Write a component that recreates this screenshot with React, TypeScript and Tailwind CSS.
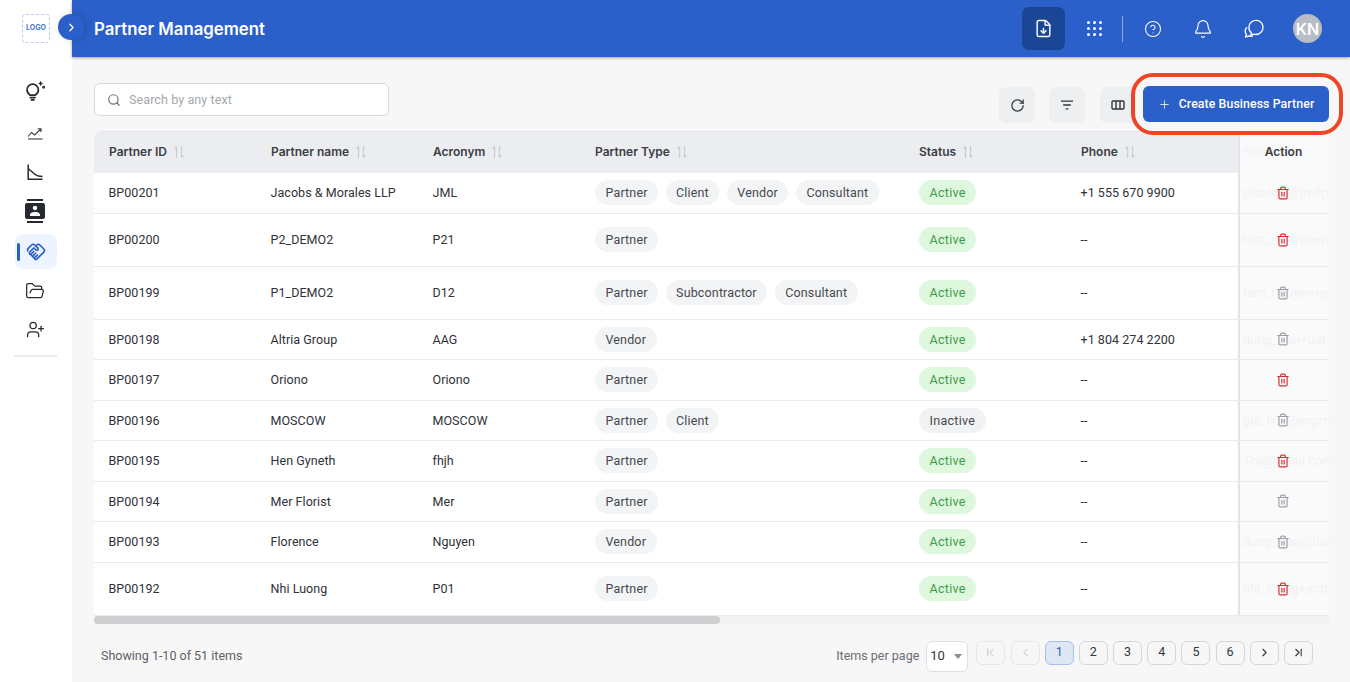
import type React from "react"
import { Bell, ChevronFirst, ChevronLast, ChevronLeft, ChevronRight, CircleHelp, FileDown, FolderOpen, Plus, RotateCw, Search, Trash2, UserPlus } from "lucide-react"
import { MdContacts, MdOutlineHandshake } from "react-icons/md"

const rows = [
  { id: "BP00201", name: "Jacobs & Morales LLP", acronym: "JML", types: ["Partner", "Client", "Vendor", "Consultant"], status: "Active", phone: "+1 555 670 9900", email: "phoenix@jmllp.com", canDelete: true, h: "h-[40.5px]" },
  { id: "BP00200", name: "P2_DEMO2", acronym: "P21", types: ["Partner"], status: "Active", phone: "--", email: "tam_nguyen+p2", canDelete: true, h: "h-[53px]" },
  { id: "BP00199", name: "P1_DEMO2", acronym: "D12", types: ["Partner", "Subcontractor", "Consultant"], status: "Active", phone: "--", email: "tam_nguyen+p1", canDelete: false, h: "h-[53px]" },
  { id: "BP00198", name: "Altria Group", acronym: "AAG", types: ["Vendor"], status: "Active", phone: "+1 804 274 2200", email: "dung_tran+uat", canDelete: false, h: "h-[40.5px]" },
  { id: "BP00197", name: "Oriono", acronym: "Oriono", types: ["Partner"], status: "Active", phone: "--", email: "--", canDelete: true, h: "h-[40.5px]" },
  { id: "BP00196", name: "MOSCOW", acronym: "MOSCOW", types: ["Partner", "Client"], status: "Inactive", phone: "--", email: "gia_huy@yopm", canDelete: false, h: "h-[40.5px]" },
  { id: "BP00195", name: "Hen Gyneth", acronym: "fhjh", types: ["Partner"], status: "Active", phone: "--", email: "Thi@gmail.com", canDelete: true, h: "h-[40.5px]" },
  { id: "BP00194", name: "Mer Florist", acronym: "Mer", types: ["Partner"], status: "Active", phone: "--", email: "--", canDelete: false, h: "h-[40.5px]" },
  { id: "BP00193", name: "Florence", acronym: "Nguyen", types: ["Vendor"], status: "Active", phone: "--", email: "dung_tran@data", canDelete: false, h: "h-[40.5px]" },
  { id: "BP00192", name: "Nhi Luong", acronym: "P01", types: ["Partner"], status: "Active", phone: "--", email: "nhi_luong+actd", canDelete: true, h: "h-[53px]" },
]

const SortIcon = () => (
  <svg width="12" height="14" viewBox="0 0 12 14" fill="none" stroke="#c9ccd1" strokeWidth="1.2">
    <path d="M3.5 13V1.5M1.5 3.5l2-2" />
    <path d="M8.5 1v11.5M10.5 10.5l-2 2" />
  </svg>
)

function Header({ label, className }: { label: string; className: string }) {
  return (
    <div className={`flex items-center gap-[6px] pb-[2px] pl-[15px] text-[12px] font-semibold text-[#3a3d42] ${className}`}>
      {label}
      <SortIcon />
    </div>
  )
}

const IdeaIcon = () => (
  <svg width="24" height="24" viewBox="0 0 24 24" fill="none" stroke="#26292e" strokeWidth="1.7" strokeLinecap="round">
    <path d="M7.2 16.2C5.2 14.9 4 13 4 10.8 4 7.6 6.6 5.2 9.7 5.2s5.7 2.4 5.7 5.6c0 2.2-1.2 4.1-3.2 5.4z" />
    <path d="M7.3 18.6h4.8M8.4 20.8h2.6" />
    <path d="M17.6 3v3M16.1 4.5h3" strokeWidth="1.3" />
    <circle cx="20.6" cy="8.2" r=".6" fill="#26292e" />
  </svg>
)

const TrendIcon = () => (
  <svg width="18" height="18" viewBox="0 0 18 18" fill="none" stroke="#3a3d42" strokeWidth="1.1">
    <path d="M2 15h14.5" />
    <path d="M2 12.5l3.6-4 3 2.4L14.8 5M11.6 4.7h3.4v3.2" />
  </svg>
)

const DeclineIcon = () => (
  <svg width="18" height="18" viewBox="0 0 18 18" fill="none" stroke="#26292e" strokeWidth="1.5">
    <path d="M2.2 1.5v14.7h14.3" />
    <path d="M2.2 5.5l6 5.2c2 1.7 4.5 2.7 8.3 2.7" />
  </svg>
)

const ColumnsIcon = () => (
  <svg width="14" height="12" viewBox="0 0 14 12" fill="none" stroke="#33363b" strokeWidth="1.4">
    <rect x="1" y="2" width="12" height="8" rx="1" />
    <path d="M5 2v8M9 2v8" />
  </svg>
)

const FilterLines = () => (
  <svg width="14" height="12" viewBox="0 0 14 12" fill="none" stroke="#33363b" strokeWidth="1.3">
    <path d="M1 2.2h12M3.2 6h7.6M5.6 9.8h2.8" />
  </svg>
)

const ChatIcon = () => (
  <svg width="22" height="22" viewBox="0 0 20 20" fill="none" stroke="white" strokeWidth="1.2" strokeLinejoin="round">
    <path d="M5.4 8.3a6.4 6.4 0 1 1 4.3 6.3c-.7.4-1.7.8-2.7.8.4-.6.6-1.2.6-1.9a6.3 6.3 0 0 1-2.2-5.2z" />
    <path d="M3.7 8.4c-1 .9-1.7 2.2-1.7 3.6 0 1.1.4 2.2 1.1 3-.1.8-.4 1.5-.9 2.2 1.1 0 2.3-.3 3.1-1 1.2.5 2.6.5 3.8.1" />
  </svg>
)

const GridIcon = () => (
  <div className="grid grid-cols-3 gap-[3px]">
    {Array.from({ length: 9 }).map((_, i) => (
      <span key={i} className="h-[3px] w-[3px] rounded-full bg-white" />
    ))}
  </div>
)

function Sidebar() {
  return (
    <aside className="relative z-10 flex w-[72px] shrink-0 flex-col bg-white">
      <div className="flex h-[57px] items-center pl-[22px]">
        <div className="flex h-[29px] w-[28px] items-center justify-center rounded-[4px] border border-dashed border-[#b9c9ee] text-[7px] font-bold text-[#4a78d6]">LOGO</div>
      </div>
      <div className="flex flex-col items-center pr-[2px] pt-[15px]">
        <div className="flex h-[38px] w-full items-center justify-center"><IdeaIcon /></div>
        <div className="flex h-[46px] w-full items-center justify-center"><TrendIcon /></div>
        <div className="flex h-[32px] w-full items-center justify-center"><DeclineIcon /></div>
        <div className="flex h-[46px] w-full items-center justify-center"><MdContacts className="text-[#26292e]" size={24} /></div>
        <div className="relative ml-[1px] flex h-[35px] w-[42px] items-center justify-center rounded-[8px] bg-[#edf4ff] text-[#2b5fc9]">
          <span className="absolute left-[2px] top-[9px] h-[18px] w-[3px] rounded-full bg-[#2b5fc9]" />
          <MdOutlineHandshake size={20} />
        </div>
        <div className="flex h-[44px] w-full items-center justify-center"><FolderOpen size={20} strokeWidth={1.5} color="#26292e" /></div>
        <div className="flex h-[32px] w-full items-center justify-center"><UserPlus size={19} strokeWidth={1.6} color="#26292e" /></div>
        <div className="mt-[10px] h-[2px] w-[43px] bg-[#ececee]" />
      </div>
    </aside>
  )
}

function TopBar() {
  return (
    <header className="relative flex h-[57px] shrink-0 items-center bg-[#2b5fc9] pl-[22px] pr-[28px] shadow-[0_1px_3px_rgba(0,0,0,0.35)]">
      <div className="absolute -left-[14px] top-[14px] flex h-[26px] w-[26px] items-center justify-center rounded-full bg-[#2b5fc9] shadow-[2px_0_8px_rgba(0,0,0,0.12)]">
        <ChevronRight size={13} strokeWidth={2.4} color="white" />
      </div>
      <h1 className="pt-[2px] text-[16.8px] font-semibold text-white">Partner Management</h1>
      <div className="ml-auto flex items-center">
        <div className="flex h-[43px] w-[43px] items-center justify-center rounded-[7px] bg-[#1b4695]">
          <FileDown size={19} strokeWidth={1.8} color="white" />
        </div>
        <div className="ml-[21px] flex w-[16px] justify-center"><GridIcon /></div>
        <div className="ml-[20px] h-[26px] w-px bg-[#8aa8e3]" />
        <div className="ml-[21px]"><CircleHelp size={18} strokeWidth={1.4} color="white" /></div>
        <div className="ml-[31px]"><Bell size={20} strokeWidth={1.4} color="white" /></div>
        <div className="ml-[30px]"><ChatIcon /></div>
        <div className="ml-[28px] flex h-[29px] w-[29px] items-center justify-center rounded-full bg-[#b8bcc4] text-[16px] font-semibold text-white">KN</div>
      </div>
    </header>
  )
}

function Toolbar() {
  return (
    <div className="relative flex h-[74px] shrink-0 items-start">
      <div className="mt-[26px] flex h-[33px] w-[295px] items-center gap-[8px] rounded-[6px] border border-[#d5d7db] bg-white pl-[12px] font-['Roboto',sans-serif] text-[12.5px] tracking-[0.1px] text-[#a4a7ad]">
        <Search size={14} strokeWidth={2} color="#6d7076" />
        <span className="pt-[1px]">Search by any text</span>
      </div>
      <div className="ml-auto mt-[30px] flex items-start">
        <button className="flex h-[36px] w-[36px] items-center justify-center rounded-[7px] bg-[#eeeff1]"><RotateCw size={15} strokeWidth={2} color="#33363b" /></button>
        <button className="ml-[14px] flex h-[36px] w-[36px] items-center justify-center rounded-[7px] bg-[#eeeff1]"><FilterLines /></button>
        <button className="ml-[15px] flex h-[36px] w-[36px] items-center justify-center rounded-[7px] bg-[#eeeff1]"><ColumnsIcon /></button>
        <button className="relative z-10 ml-[7px] -mt-px flex h-[36px] w-[186px] items-center justify-center gap-[8px] rounded-[6px] bg-[#2b5fc9] font-['Roboto',sans-serif] text-[12.3px] font-medium tracking-[0.1px] text-white">
          <Plus size={13} strokeWidth={1.4} color="white" />
          Create Business Partner
        </button>
      </div>
      <div className="pointer-events-none absolute -right-[14px] top-[16px] z-20 h-[62px] w-[212px] rounded-[22px] border-[4px] border-[#ee4526]" />
    </div>
  )
}

function Chip({ label }: { label: string }) {
  return <span className="rounded-full bg-[#f3f4f5] px-[10.5px] py-[4px] text-[12.5px] leading-[17px] tracking-[0.15px] text-[#45484d]">{label}</span>
}

function Table() {
  return (
    <div className="overflow-hidden rounded-t-[8px] bg-white font-['Roboto',sans-serif] text-[12.5px] text-[#2f3237]">
      <div className="flex h-[42px] border-t border-[#e2e4e8] font-['Inter',sans-serif]">
        <div className="flex flex-1 bg-[#ecedf1]">
          <Header label="Partner ID" className="w-[162px]" />
          <Header label="Partner name" className="w-[162px]" />
          <Header label="Acronym" className="w-[162px]" />
          <Header label="Partner Type" className="w-[324px]" />
          <Header label="Status" className="w-[162px]" />
          <Header label="Phone" className="flex-1" />
        </div>
        <div className="relative flex w-[91px] items-center justify-center border-l-2 border-[#e3e4e7] bg-[#fafafa] pb-[2px] pr-[2px] text-[12px] font-semibold text-[#3a3d42]">
          <span className="absolute left-[3px] font-normal text-[#f3f3f4]">Email</span>
          <span className="relative">Action</span>
        </div>
      </div>
      {rows.map((row) => (
        <div key={row.id} className={`flex border-b border-[#e9eaec] ${row.h}`}>
          <div className="flex flex-1 items-center tracking-[0.05px]">
            <div className="w-[162px] pl-[14.5px] pt-[2px]">{row.id}</div>
            <div className="w-[162px] pl-[14.5px] pt-[2px]">{row.name}</div>
            <div className="w-[162px] pl-[14.5px] pt-[2px]">{row.acronym}</div>
            <div className="flex w-[324px] gap-[7.5px] pl-[15px]">
              {row.types.map((t) => <Chip key={t} label={t} />)}
            </div>
            <div className="w-[162px] pl-[15px]">
              {row.status === "Active"
                ? <span className="inline-block rounded-full bg-[#ddf8dc] px-[10.5px] py-[4px] leading-[17px] tracking-[0.3px] text-[#3f9a4e]">Active</span>
                : <span className="inline-block rounded-full bg-[#f1f2f3] px-[10.5px] py-[4px] leading-[17px] tracking-[0.3px] text-[#45484d]">Inactive</span>}
            </div>
            <div className="flex-1 pl-[14.5px] pt-[2px]">{row.phone}</div>
          </div>
          <div className="relative flex w-[91px] items-center overflow-hidden whitespace-nowrap border-l-2 border-[#e3e4e7] bg-[#fafafa] pl-[3px] text-[13px] text-[#f2f2f3]">
            {row.email}
            <Trash2 size={14} strokeWidth={2} color={row.canDelete ? "#d32f2f" : "#9a9ea6"} className="absolute left-[36px]" />
          </div>
        </div>
      ))}
    </div>
  )
}

function PageBtn({ children, active, disabled }: { children: React.ReactNode; active?: boolean; disabled?: boolean }) {
  return (
    <div className={`flex h-[24px] w-[29px] items-center justify-center rounded-[6px] border text-[12.5px] ${active ? "border-[#a5c0ec] bg-[#dfe7f5] text-[#2b5fc9]" : disabled ? "border-[#e6e7e9] text-[#b4b6bb]" : "border-[#d5d6d9] text-[#33363b]"}`}>
      {children}
    </div>
  )
}

function Footer() {
  return (
    <div className="flex h-[59px] items-start justify-between pl-[7px] pr-[16px] font-['Roboto',sans-serif]">
      <span className="mt-[24px] text-[12.5px] leading-[16px] text-[#5c5f65]">Showing 1-10 of 51 items</span>
      <div className="mt-[17px] flex items-start">
        <span className="mt-[7px] text-[12.5px] leading-[16px] text-[#6a6d73]">Items per page</span>
        <div className="ml-[7px] flex h-[31px] w-[42px] items-center justify-between rounded-[6px] border border-[#dedfe2] bg-white pl-[3px] pr-[4px] text-[13px] text-[#33363b]">
          10
          <svg width="10" height="5" viewBox="0 0 10 5"><path d="M1 0h8L5 5z" fill="#8a8d93" /></svg>
        </div>
        <div className="ml-[8px] flex gap-[5.2px]">
          <PageBtn disabled><ChevronFirst size={13} strokeWidth={1.6} /></PageBtn>
          <PageBtn disabled><ChevronLeft size={13} strokeWidth={1.6} /></PageBtn>
          <PageBtn active>1</PageBtn>
          <PageBtn>2</PageBtn>
          <PageBtn>3</PageBtn>
          <PageBtn>4</PageBtn>
          <PageBtn>5</PageBtn>
          <PageBtn>6</PageBtn>
          <PageBtn><ChevronRight size={13} strokeWidth={2} /></PageBtn>
          <PageBtn><ChevronLast size={13} strokeWidth={2} /></PageBtn>
        </div>
      </div>
    </div>
  )
}

export default function App() {
  return (
    <div className="flex h-[682px] w-[1350px] overflow-hidden bg-[#f7f7f8] font-['Inter',sans-serif]">
      <Sidebar />
      <main className="relative z-20 flex min-w-0 flex-1 flex-col">
        <TopBar />
        <div className="flex flex-1 flex-col pl-[22px] pr-[21px]">
          <Toolbar />
          <Table />
          <div className="h-[8px] bg-[#f3f3f4]">
            <div className="h-[8px] w-[626px] rounded-full bg-[#cfcfd1]" />
          </div>
          <Footer />
        </div>
      </main>
    </div>
  )
}
